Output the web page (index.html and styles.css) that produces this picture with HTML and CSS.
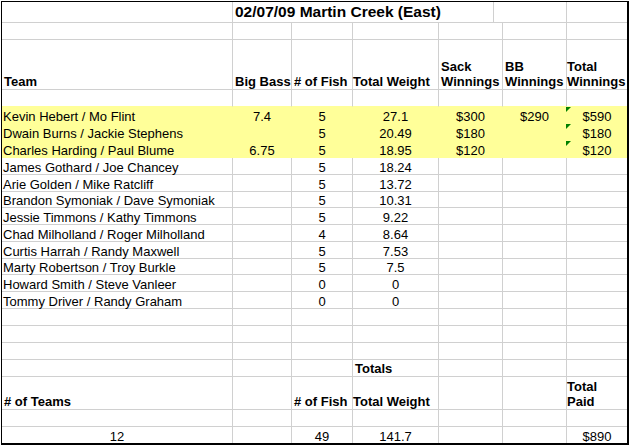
FILE: index.html
```html
<!DOCTYPE html>
<html>
<head>
<meta charset="utf-8">
<link rel="stylesheet" href="styles.css">
</head>
<body>
<div class="sheet">
  <div class="row row-title">
    <div class="c"></div>
    <div class="c title">02/07/09 Martin Creek (East)</div>
    <div class="c"></div>
    <div class="c"></div>
  </div>
  <div class="row"><div class="c"></div><div class="c"></div><div class="c"></div><div class="c"></div><div class="c"></div><div class="c"></div><div class="c"></div></div>
  <div class="row row-head hdr">
    <div class="c">Team</div>
    <div class="c">Big Bass</div>
    <div class="c">#&nbsp;of Fish</div>
    <div class="c tight">Total Weight</div>
    <div class="c"><span>Sack<br>Winnings</span></div>
    <div class="c"><span>BB<br>Winnings</span></div>
    <div class="c tight"><span>Total<br>Winnings</span></div>
  </div>
  <div class="row above-fill"><div class="c"></div><div class="c"></div><div class="c"></div><div class="c"></div><div class="c"></div><div class="c"></div><div class="c"></div></div>

  <div class="row fill">
    <div class="c">Kevin Hebert / Mo Flint</div><div class="c ctr">7.4</div><div class="c ctr">5</div><div class="c ctr">27.1</div><div class="c ctr">$300</div><div class="c ctr">$290</div><div class="c ctr err">$590</div>
  </div>
  <div class="row fill">
    <div class="c">Dwain Burns / Jackie Stephens</div><div class="c ctr"></div><div class="c ctr">5</div><div class="c ctr">20.49</div><div class="c ctr">$180</div><div class="c ctr"></div><div class="c ctr err">$180</div>
  </div>
  <div class="row fill">
    <div class="c">Charles Harding / Paul Blume</div><div class="c ctr">6.75</div><div class="c ctr">5</div><div class="c ctr">18.95</div><div class="c ctr">$120</div><div class="c ctr"></div><div class="c ctr err">$120</div>
  </div>

  <div class="row"><div class="c">James Gothard / Joe Chancey</div><div class="c"></div><div class="c ctr">5</div><div class="c ctr">18.24</div><div class="c"></div><div class="c"></div><div class="c"></div></div>
  <div class="row"><div class="c">Arie Golden / Mike Ratcliff</div><div class="c"></div><div class="c ctr">5</div><div class="c ctr">13.72</div><div class="c"></div><div class="c"></div><div class="c"></div></div>
  <div class="row row-short"><div class="c">Brandon Symoniak / Dave Symoniak</div><div class="c"></div><div class="c ctr">5</div><div class="c ctr">10.31</div><div class="c"></div><div class="c"></div><div class="c"></div></div>
  <div class="row"><div class="c">Jessie Timmons / Kathy Timmons</div><div class="c"></div><div class="c ctr">5</div><div class="c ctr">9.22</div><div class="c"></div><div class="c"></div><div class="c"></div></div>
  <div class="row"><div class="c">Chad Milholland / Roger Milholland</div><div class="c"></div><div class="c ctr">4</div><div class="c ctr">8.64</div><div class="c"></div><div class="c"></div><div class="c"></div></div>
  <div class="row"><div class="c">Curtis Harrah / Randy Maxwell</div><div class="c"></div><div class="c ctr">5</div><div class="c ctr">7.53</div><div class="c"></div><div class="c"></div><div class="c"></div></div>
  <div class="row row-short"><div class="c">Marty Robertson / Troy Burkle</div><div class="c"></div><div class="c ctr">5</div><div class="c ctr">7.5</div><div class="c"></div><div class="c"></div><div class="c"></div></div>
  <div class="row"><div class="c">Howard Smith / Steve Vanleer</div><div class="c"></div><div class="c ctr">0</div><div class="c ctr">0</div><div class="c"></div><div class="c"></div><div class="c"></div></div>
  <div class="row"><div class="c">Tommy Driver / Randy Graham</div><div class="c"></div><div class="c ctr">0</div><div class="c ctr">0</div><div class="c"></div><div class="c"></div><div class="c"></div></div>

  <div class="row"><div class="c"></div><div class="c"></div><div class="c"></div><div class="c"></div><div class="c"></div><div class="c"></div><div class="c"></div></div>
  <div class="row"><div class="c"></div><div class="c"></div><div class="c"></div><div class="c"></div><div class="c"></div><div class="c"></div><div class="c"></div></div>
  <div class="row"><div class="c"></div><div class="c"></div><div class="c"></div><div class="c"></div><div class="c"></div><div class="c"></div><div class="c"></div></div>
  <div class="row hdr"><div class="c"></div><div class="c"></div><div class="c"></div><div class="c">Totals</div><div class="c"></div><div class="c"></div><div class="c"></div></div>
  <div class="row row-head2 hdr">
    <div class="c">#&nbsp;of Teams</div>
    <div class="c"></div>
    <div class="c">#&nbsp;of Fish</div>
    <div class="c tight">Total Weight</div>
    <div class="c"></div>
    <div class="c"></div>
    <div class="c tight"><span>Total<br>Paid</span></div>
  </div>
  <div class="row"><div class="c"></div><div class="c"></div><div class="c"></div><div class="c"></div><div class="c"></div><div class="c"></div><div class="c"></div></div>
  <div class="row row-last">
    <div class="c ctr">12</div><div class="c"></div><div class="c ctr">49</div><div class="c ctr">141.7</div><div class="c"></div><div class="c"></div><div class="c ctr">$890</div>
  </div>
</div>
</body>
</html>
```

FILE: styles.css
```css
html, body {
  margin: 0;
  padding: 0;
  background: #fff;
}

body {
  font-family: "Liberation Sans", Arial, sans-serif;
  font-size: 13px;
  color: #000;
  padding: 1px 0 0 1px;
}

.sheet {
  width: 625px;
  border-style: solid;
  border-color: #000;
  border-width: 1px 2px 2px 1px;
}

.row {
  display: grid;
  grid-template-columns: 231px 59px 61px 86px 64px 64px 60px;
  height: 17px;
}

.row-title {
  grid-template-columns: 231px 261px 73px 60px;
  height: 21px;
}

.row-head { height: 50px; }
.row-head2 { height: 33px; }
.row-short { height: 16px; }
.row-last { height: 16px; }

.c {
  box-sizing: border-box;
  min-width: 0;
  border-right: 1px solid #d0d0d0;
  border-bottom: 1px solid #d0d0d0;
  display: flex;
  align-items: flex-end;
  padding-left: 1px;
  line-height: 13px;
  white-space: nowrap;
}

.c:last-child { border-right: 0; }

.row-last .c { border-bottom: 0; }

.ctr {
  justify-content: center;
  padding-left: 0;
}

.hdr .c {
  font-weight: bold;
  line-height: 15px;
  padding-left: 2px;
}

.hdr .c.tight { padding-left: 0; }

.title {
  font-size: 15.5px;
  font-weight: bold;
  line-height: 20px;
  padding-left: 2px;
}

.above-fill .c { border-bottom-color: #ffff99; }

.fill .c {
  background: #ffff99;
  border-color: #ffff99;
}

.err { position: relative; }

.err::before {
  content: "";
  position: absolute;
  left: -1px;
  top: 0;
  width: 0;
  height: 0;
  border-top: 5px solid #008000;
  border-right: 5px solid transparent;
}
```
